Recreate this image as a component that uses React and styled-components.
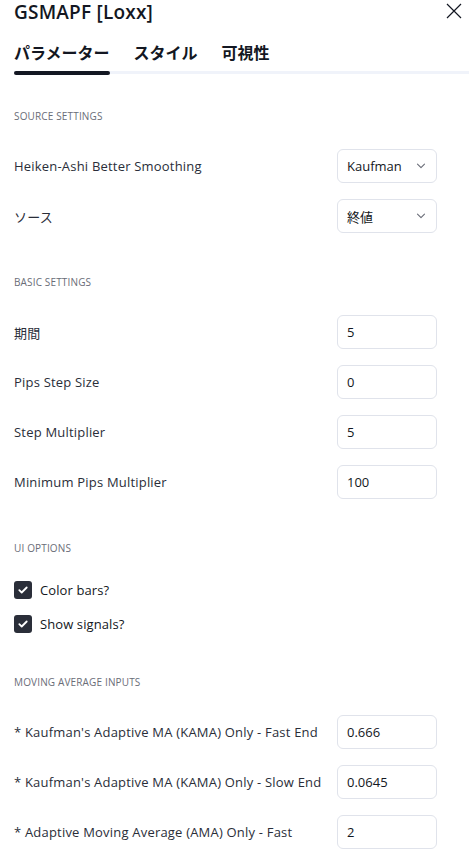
import styled, { createGlobalStyle } from "styled-components";

const GlobalStyle = createGlobalStyle`
  body {
    margin: 0;
    background: #ffffff;
    font-family: "Open Sans", "Noto Sans CJK JP", sans-serif;
    color: #131722;
  }
`;

const sections = [
  {
    title: "SOURCE SETTINGS",
    rows: [
      { type: "select", label: "Heiken-Ashi Better Smoothing", value: "Kaufman" },
      { type: "select", label: "ソース", value: "終値" },
    ],
  },
  {
    title: "BASIC SETTINGS",
    rows: [
      { type: "input", label: "期間", value: "5" },
      { type: "input", label: "Pips Step Size", value: "0" },
      { type: "input", label: "Step Multiplier", value: "5" },
      { type: "input", label: "Minimum Pips Multiplier", value: "100" },
    ],
  },
  {
    title: "UI OPTIONS",
    rows: [
      { type: "check", label: "Color bars?" },
      { type: "check", label: "Show signals?" },
    ],
  },
  {
    title: "MOVING AVERAGE INPUTS",
    rows: [
      { type: "input", label: "* Kaufman's Adaptive MA (KAMA) Only - Fast End", value: "0.666" },
      { type: "input", label: "* Kaufman's Adaptive MA (KAMA) Only - Slow End", value: "0.0645" },
      { type: "input", label: "* Adaptive Moving Average (AMA) Only - Fast", value: "2" },
    ],
  },
];

const Chevron = () => (
  <svg width="10" height="6" viewBox="0 0 10 6" fill="none">
    <path d="M1.5 1.2l3.5 3.5 3.5-3.5" stroke="#6a6d78" strokeWidth="1.1" strokeLinecap="round" strokeLinejoin="round" />
  </svg>
);

const CheckIcon = () => (
  <svg width="10" height="8" viewBox="0 0 10 8" fill="none">
    <path d="M1.3 4.2l2.4 2.3L8.7 1.5" stroke="#fff" strokeWidth="1.8" strokeLinecap="round" strokeLinejoin="round" />
  </svg>
);

const App = () => {
  return (
    <Dialog>
      <GlobalStyle />
      <Header>
        <Title>GSMAPF [Loxx]</Title>
        <CloseButton>
          <svg width="16" height="16" viewBox="0 0 16 16" fill="none">
            <path d="M1 1l14 14M15 1L1 15" stroke="#131722" strokeWidth="1.2" />
          </svg>
        </CloseButton>
      </Header>
      <Tabs>
        <Tab active>パラメーター</Tab>
        <Tab>スタイル</Tab>
        <Tab>可視性</Tab>
      </Tabs>
      <Body>
        {sections.map((section) => (
          <Section key={section.title}>
            <SectionTitle>{section.title}</SectionTitle>
            {section.rows.map((row) =>
              row.type === "check" ? (
                <CheckRow key={row.label}>
                  <CheckBox>
                    <CheckIcon />
                  </CheckBox>
                  <CheckLabel>{row.label}</CheckLabel>
                </CheckRow>
              ) : (
                <Row key={row.label}>
                  <Label>{row.label}</Label>
                  <Control>
                    <span>{row.value}</span>
                    {row.type === "select" && <Chevron />}
                  </Control>
                </Row>
              )
            )}
          </Section>
        ))}
      </Body>
    </Dialog>
  );
};

export default App;

const Dialog = styled.div`
  width: 473px;
  height: 860px;
  overflow: hidden;
  background: #fff;
`;
const Header = styled.div`
  height: 20px;
  display: flex;
  align-items: center;
  justify-content: space-between;
  padding: 2px 11px 0 14px;
`;
const Title = styled.div`
  font-size: 19px;
  line-height: 20px;
  font-weight: 600;
  color: #131722;
  letter-spacing: 0.2px;
`;
const CloseButton = styled.div`
  width: 16px;
  height: 16px;
  display: flex;
  margin-top: -3px;
`;
const Tabs = styled.div`
  margin: 19px 4px 0 14px;
  height: 30px;
  display: flex;
  gap: 24px;
  border-bottom: 3px solid #f0f3fa;
`;
const Tab = styled.div`
  position: relative;
  font-size: 16px;
  font-weight: 700;
  color: #131722;
  line-height: 24px;
  &::after {
    content: "";
    display: ${(p) => (p.active ? "block" : "none")};
    position: absolute;
    left: 0;
    right: 0;
    bottom: -4px;
    height: 4px;
    border-radius: 2px;
    background: #131722;
  }
`;
const Body = styled.div`
  padding: 34px 36px 0 14px;
`;
const Section = styled.div`
  & + & {
    padding-top: 33px;
  }
`;
const SectionTitle = styled.div`
  height: 16px;
  line-height: 16px;
  font-size: 10px;
  letter-spacing: 0.15px;
  color: #6a6d78;
  text-transform: uppercase;
  margin-bottom: 17px;
`;
const Row = styled.div`
  height: 50px;
  display: flex;
  align-items: center;
  justify-content: space-between;
`;
const Label = styled.div`
  font-size: 13px;
  letter-spacing: 0.2px;
  color: #2a2e39;
`;
const Control = styled.div`
  box-sizing: border-box;
  width: 100px;
  height: 34px;
  border: 1px solid #e0e3eb;
  border-radius: 6px;
  display: flex;
  align-items: center;
  justify-content: space-between;
  padding: 0 10px 0 9px;
  font-size: 13px;
  color: #131722;
`;
const CheckRow = styled.div`
  height: 34px;
  display: flex;
  align-items: center;
  gap: 8px;
`;
const CheckBox = styled.div`
  width: 18px;
  height: 18px;
  border-radius: 3px;
  background: #2a2e39;
  display: flex;
  align-items: center;
  justify-content: center;
`;
const CheckLabel = styled.div`
  font-size: 13px;
  letter-spacing: 0.1px;
  color: #131722;
`;
